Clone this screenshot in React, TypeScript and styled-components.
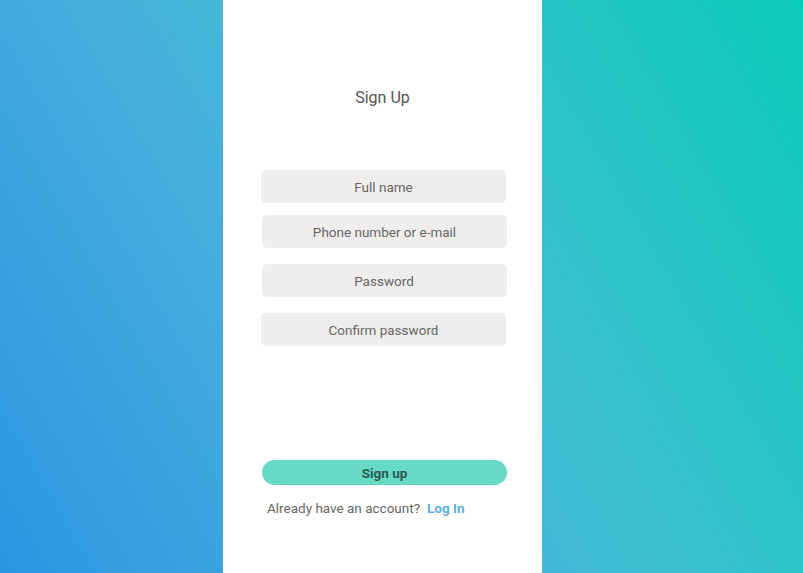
import styled, { createGlobalStyle } from 'styled-components';

const GlobalStyle = createGlobalStyle`
  html, body {
    margin: 0;
    padding: 0;
    height: 100%;
  }
  body {
    font-family: Roboto, "Liberation Sans", Arial, sans-serif;
  }
`;

const Page = styled.div`
  width: 100%;
  height: 100vh;
  min-height: 573px;
  display: flex;
  padding-left: 223px;
  box-sizing: border-box;
  background: linear-gradient(60deg, #2a96e0 0%, #48aedd 36%, #3ec0d1 58%, #0bcbb7 100%);
  overflow: hidden;
`;

const Panel = styled.div`
  width: 319px;
  background: #ffffff;
  display: flex;
  flex-direction: column;
  align-items: center;
  padding-top: 88px;
  box-sizing: border-box;
`;

const Title = styled.h1`
  margin: 0;
  font-size: 16px;
  line-height: 20px;
  font-weight: 400;
  color: #555555;
`;

const Form = styled.form`
  display: flex;
  flex-direction: column;
  align-items: center;
  margin: 62px 0 0 2px;
`;

const Field = styled.input<{ $gap: number; $shift?: number }>`
  width: 245px;
  height: 33px;
  margin-top: ${p => p.$gap}px;
  margin-left: ${p => (p.$shift ?? 0) * 2}px;
  border: none;
  border-radius: 5px;
  background: #efeeed;
  text-align: center;
  font-family: inherit;
  font-size: 13.5px;
  color: #666666;
  outline: none;
  box-sizing: border-box;

  &::placeholder {
    color: #666666;
  }
`;

const SubmitButton = styled.button`
  width: 245px;
  height: 25px;
  margin-top: 114px;
  margin-left: 2px;
  border: none;
  border-radius: 13px;
  background: #66dac4;
  color: #2a5a52;
  font-family: inherit;
  font-size: 13.5px;
  font-weight: 700;
  cursor: pointer;
`;

const Footer = styled.p`
  align-self: flex-start;
  margin: 14px 0 0 44px;
  font-size: 13.5px;
  line-height: 18px;
  color: #666666;
`;

const LoginLink = styled.a`
  margin-left: 7px;
  color: #5aaee2;
  font-weight: 700;
  text-decoration: none;
`;

const App = () => {
  return (
    <>
      <GlobalStyle />
      <Page>
        <Panel>
          <Title>Sign Up</Title>
          <Form onSubmit={e => e.preventDefault()}>
            <Field $gap={0} placeholder="Full name" />
            <Field $gap={12} $shift={1} placeholder="Phone number or e-mail" />
            <Field $gap={16} $shift={0.5} placeholder="Password" />
            <Field $gap={16} type="password" placeholder="Confirm password" />
            <SubmitButton type="submit">Sign up</SubmitButton>
          </Form>
          <Footer>
            Already have an account?
            <LoginLink href="#">Log In</LoginLink>
          </Footer>
        </Panel>
      </Page>
    </>
  );
};

export default App;
